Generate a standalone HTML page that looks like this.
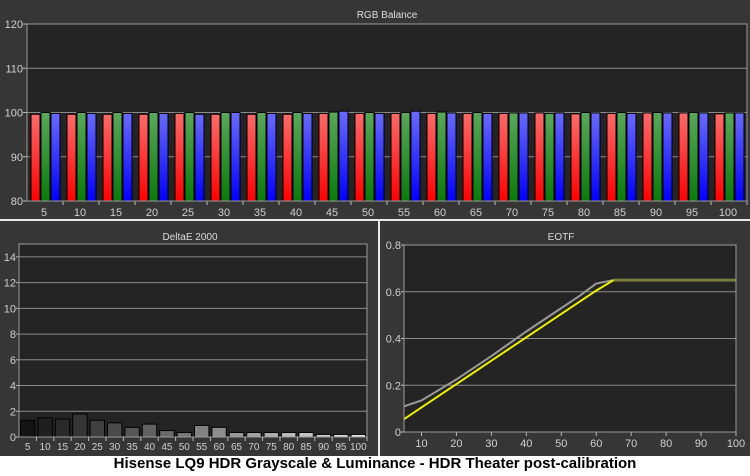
<!DOCTYPE html>
<html><head><meta charset="utf-8">
<style>
html,body{margin:0;padding:0;background:#fff;}
body{width:750px;height:476px;overflow:hidden;position:relative;font-family:"Liberation Sans",sans-serif;}
svg{position:absolute;left:0;top:0;}
.cap{position:absolute;left:0;top:455px;width:750px;text-align:center;font:bold 15px "Liberation Sans",sans-serif;color:#000;}
</style></head><body>
<svg id="s" width="750" height="456" viewBox="0 0 750 456" font-family="Liberation Sans, sans-serif">
<defs>
<linearGradient id="gr" x1="0" y1="0" x2="0" y2="1"><stop offset="0" stop-color="#ff6a6a"/><stop offset="1" stop-color="#ff0000"/></linearGradient>
<linearGradient id="gg" x1="0" y1="0" x2="0" y2="1"><stop offset="0" stop-color="#5aa85a"/><stop offset="1" stop-color="#0a7a0a"/></linearGradient>
<linearGradient id="gb" x1="0" y1="0" x2="0" y2="1"><stop offset="0" stop-color="#6a6aff"/><stop offset="1" stop-color="#0000ff"/></linearGradient>
</defs>
<rect x="0" y="0" width="750" height="456" fill="#363636"/>
<rect x="0" y="219" width="750" height="2" fill="#e8e8e8"/>
<rect x="378" y="221" width="2" height="235" fill="#e8e8e8"/>
<text x="387" y="18" fill="#ddd" font-size="10" text-anchor="middle">RGB Balance</text>
<text x="190" y="240" fill="#ddd" font-size="10" text-anchor="middle">DeltaE 2000</text>
<text x="561" y="240" fill="#ddd" font-size="10" text-anchor="middle">EOTF</text>
<g id="g"></g>
</svg>
<div class="cap">Hisense LQ9 HDR Grayscale &amp; Luminance - HDR Theater post-calibration</div>
<script>
var g=document.getElementById('g'),h='';
function R(x,y,w,hh,f,st){h+='<rect x="'+x+'" y="'+y+'" width="'+w+'" height="'+hh+'" fill="'+f+'"'+(st?' stroke="'+st+'" stroke-width="1"':'')+'/>';}
function L(x1,y1,x2,y2,c,w){h+='<line x1="'+x1+'" y1="'+y1+'" x2="'+x2+'" y2="'+y2+'" stroke="'+c+'" stroke-width="'+(w||1)+'"/>';}
function T(x,y,t,a){h+='<text x="'+x+'" y="'+y+'" fill="#d0d0d0" font-size="11" text-anchor="'+(a||'middle')+'">'+t+'</text>';}
// top chart
var X0=27,X1=747,Y0=24,Y1=201;
R(X0,Y0,X1-X0,Y1-Y0,'#242424');
function yv(v){return Y1-(v-80)/40*(Y1-Y0);}
[80,90,100,110,120].forEach(function(v){var y=yv(v);L(X0,y,X1,y,'#8a8a8a');L(X0-4,y,X0,y,'#bbb');T(X0-4,y+4,v,'end');});
var rv=[99.6,99.6,99.6,99.6,99.8,99.6,99.6,99.6,99.8,99.8,99.8,99.8,99.8,99.8,99.9,99.7,99.8,99.9,99.9,99.7];
var gv=[100,100,100,100,100,100,100,100,100.1,100,100,100.1,100,99.9,99.8,100,100,100,100,99.9];
var bv=[99.8,99.8,99.8,99.8,99.6,100,99.8,99.8,100.3,99.8,100.3,99.9,99.8,99.9,99.9,99.9,99.8,99.9,99.9,99.9];
for(var i=0;i<20;i++){var gx=X0+i*36;
 R(gx+4,yv(rv[i]),9,Y1-yv(rv[i]),'url(#gr)','#000');
 R(gx+14,yv(gv[i]),9,Y1-yv(gv[i]),'url(#gg)','#000');
 R(gx+24,yv(bv[i]),9,Y1-yv(bv[i]),'url(#gb)','#000');
 L(gx+36,Y1,gx+36,Y1+4,'#bbb');T(gx+17,Y1+15,(i+1)*5);}
h+='<rect x="'+X0+'" y="'+Y0+'" width="'+(X1-X0)+'" height="'+(Y1-Y0)+'" fill="none" stroke="#9a9a9a"/>';
// deltaE
var A0=19,A1=367,B0=244,B1=437;
R(A0,B0,A1-A0,B1-B0,'#242424');
function dy(v){return B1-v/15*(B1-B0);}
[0,2,4,6,8,10,12,14].forEach(function(v){var y=dy(v);if(v)L(A0,y,A1,y,'#8a8a8a');L(A0-3,y,A0,y,'#bbb');T(A0-3,y+4,v,'end');});
var dv=[1.3,1.5,1.4,1.8,1.3,1.1,0.75,1.0,0.5,0.35,0.9,0.75,0.35,0.35,0.35,0.35,0.35,0.2,0.2,0.2];
var st=(A1-A0)/20;
for(var i=0;i<20;i++){var bx=A0+i*st;var c=Math.round(20+i*11);
 R(bx+1.5,dy(dv[i]),st-3,B1-dy(dv[i]),'rgb('+c+','+c+','+c+')','#000');
 L(bx+st,B1,bx+st,B1+4,'#bbb');h+='<text x="'+(bx+st/2)+'" y="'+(B1+13)+'" fill="#d0d0d0" font-size="10" text-anchor="middle">'+((i+1)*5)+'</text>';}
h+='<rect x="'+A0+'" y="'+B0+'" width="'+(A1-A0)+'" height="'+(B1-B0)+'" fill="none" stroke="#9a9a9a"/>';
// EOTF
var C0=404,C1=736,D0=245,D1=432;
R(C0,D0,C1-C0,D1-D0,'#242424');
function ex(v){return C0+(v-5)/95*(C1-C0);}function ey(v){return D1-v/0.8*(D1-D0);}
[0,0.2,0.4,0.6,0.8].forEach(function(v){var y=ey(v);if(v)L(C0,y,C1,y,'#8a8a8a');L(C0-3,y,C0,y,'#bbb');T(C0-3,y+4,v,'end');});
for(var v=10;v<=100;v+=10){var x=ex(v);L(x,D1,x,D1+4,'#bbb');T(x,D1+15,v);}
h+='<polyline fill="none" stroke="#9a9a9a" stroke-width="2" points="'+[[5,0.11],[10,0.135],[20,0.225],[30,0.325],[40,0.43],[50,0.53],[55,0.58],[60,0.635],[65,0.65],[100,0.65]].map(function(p){return ex(p[0])+','+ey(p[1]);}).join(' ')+'"/>';
h+='<polyline fill="none" stroke="#f0f000" stroke-width="2" points="'+[[5,0.055],[10,0.105],[20,0.205],[30,0.305],[40,0.405],[50,0.505],[60,0.605],[65,0.65]].map(function(p){return ex(p[0])+','+ey(p[1]);}).join(' ')+'"/>';
h+='<line x1="'+ex(65)+'" y1="'+ey(0.65)+'" x2="'+C1+'" y2="'+ey(0.65)+'" stroke="#7a7a3a" stroke-width="3"/>';
h+='<rect x="'+C0+'" y="'+D0+'" width="'+(C1-C0)+'" height="'+(D1-D0)+'" fill="none" stroke="#9a9a9a"/>';
g.innerHTML=h;
</script>
</body></html>
